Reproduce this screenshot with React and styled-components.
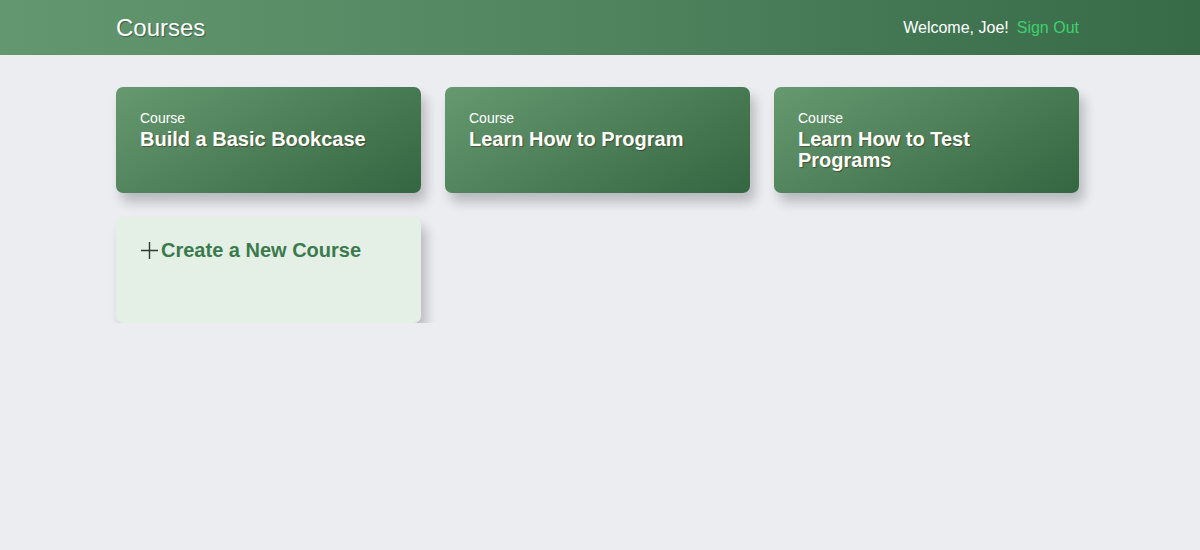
import React from "react";
import styled, { createGlobalStyle } from "styled-components";

const Global = createGlobalStyle`
  html, body { margin: 0; padding: 0; background: #ecedf1; }
  body { font-family: "Liberation Sans", Arial, sans-serif; }
`;

const Header = styled.header`
  height: 55px;
  background: linear-gradient(90deg, #62976f 0%, #4f845f 50%, #376a47 100%);
`;

const HeaderInner = styled.div`
  width: 963px;
  margin-left: 116px;
  height: 100%;
  display: flex;
  align-items: center;
  justify-content: space-between;
`;

const Title = styled.h1`
  margin: 0;
  font-size: 24px;
  font-weight: 400;
  color: #fff;
  text-shadow: 1px 1px 1px rgba(0, 0, 0, 0.35);
`;

const UserArea = styled.div`
  display: flex;
  align-items: center;
  gap: 8px;
  font-size: 16px;
`;

const Welcome = styled.span`
  color: #fff;
`;

const SignOut = styled.a`
  color: #3fd06f;
  text-decoration: none;
  cursor: pointer;
`;

const Grid = styled.main`
  width: 963px;
  margin: 32px 0 0 116px;
  display: grid;
  grid-template-columns: repeat(3, 305px);
  grid-auto-rows: 106px;
  column-gap: 24px;
  row-gap: 24px;
`;

const Card = styled.div`
  box-sizing: border-box;
  border-radius: 7px;
  padding: 23px 24px;
  box-shadow: 5px 9px 12px rgba(0, 0, 0, 0.22);
  background: ${(p) =>
    p.$create
      ? "#e4efe6"
      : "linear-gradient(150deg, #66996f 0%, #4d8059 50%, #346641 100%)"};
`;

const Label = styled.div`
  color: #fff;
  font-size: 14px;
  line-height: 16px;
`;

const CourseName = styled.div`
  color: #fff;
  font-size: 20px;
  font-weight: 700;
  line-height: 21px;
  margin-top: 3px;
  text-shadow: 1px 1px 1px rgba(60, 20, 0, 0.45);
  max-width: 230px;
`;

const CreateTitle = styled.div`
  display: flex;
  align-items: center;
  color: #3a7a4d;
  font-size: 20px;
  font-weight: 700;
  line-height: 24px;
  margin-top: -2px;
`;

const Plus = styled.svg`
  width: 19px;
  height: 19px;
  margin-right: 2px;
  flex-shrink: 0;
`;

const courses = [
  "Build a Basic Bookcase",
  "Learn How to Program",
  "Learn How to Test Programs",
];

export default function App() {
  return (
    <>
      <Global />
      <Header>
        <HeaderInner>
          <Title>Courses</Title>
          <UserArea>
            <Welcome>Welcome, Joe!</Welcome>
            <SignOut>Sign Out</SignOut>
          </UserArea>
        </HeaderInner>
      </Header>
      <Grid>
        {courses.map((c) => (
          <Card key={c}>
            <Label>Course</Label>
            <CourseName>{c}</CourseName>
          </Card>
        ))}
        <Card $create>
          <CreateTitle>
            <Plus viewBox="0 0 19 19">
              <path d="M9.5 1v17M1 9.5h17" stroke="#2d3a31" strokeWidth="1.4" fill="none" />
            </Plus>
            Create a New Course
          </CreateTitle>
        </Card>
      </Grid>
    </>
  );
}
